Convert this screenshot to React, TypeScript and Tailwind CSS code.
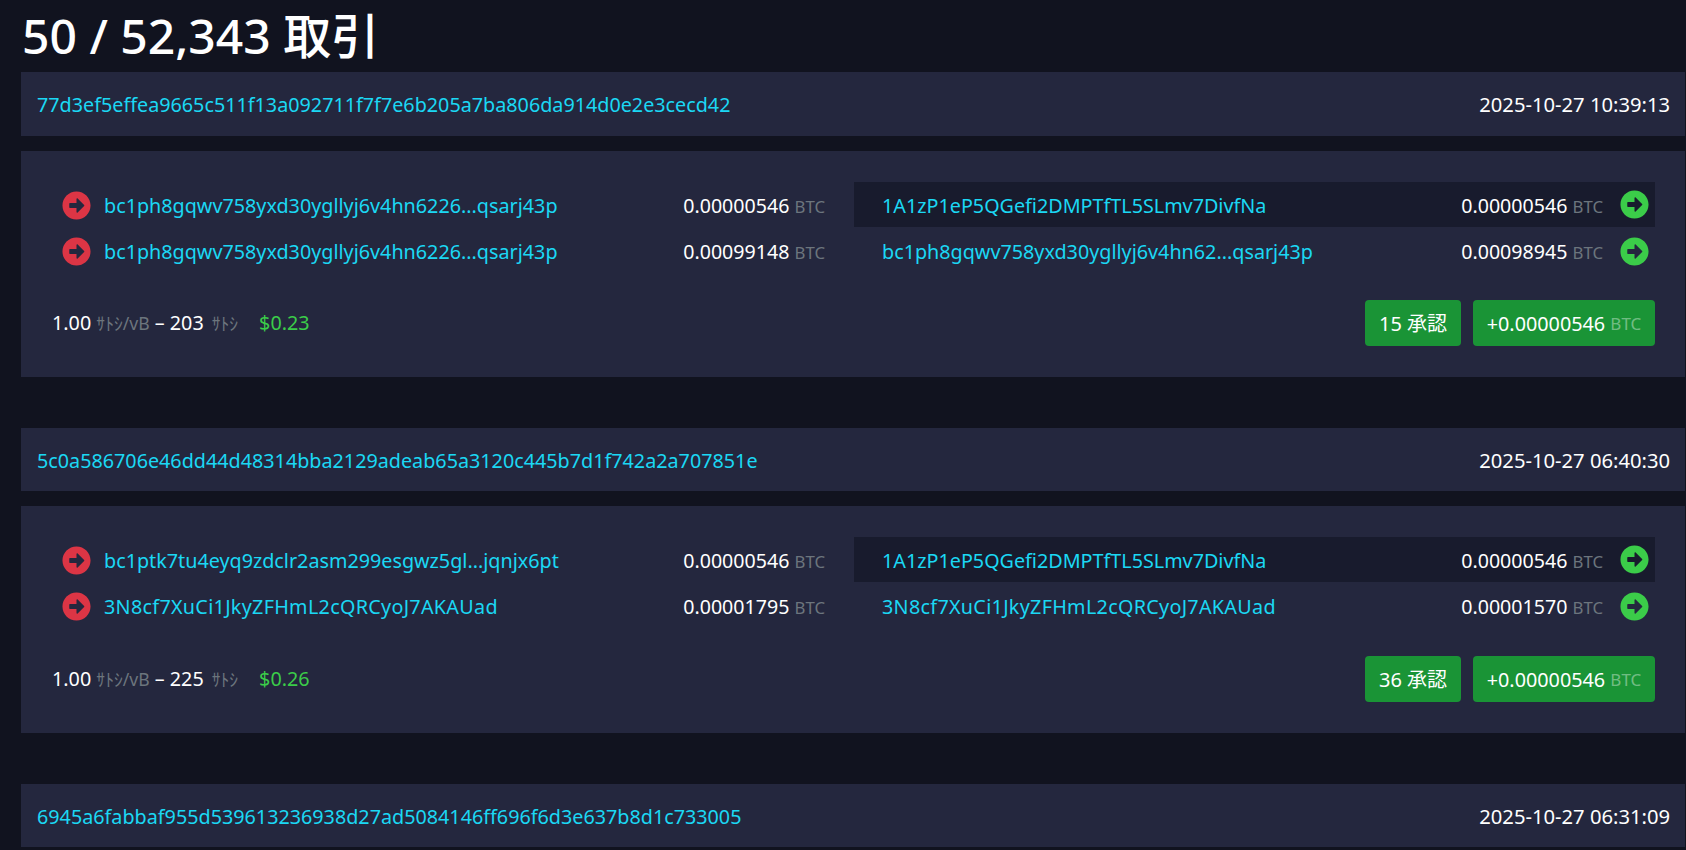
import { FaArrowAltCircleRight } from "react-icons/fa";

const font = "font-['Noto_Sans','Noto_Sans_CJK_JP',sans-serif]";

function Amount({ v }: { v: string }) {
  return (
    <span className="whitespace-nowrap pt-[2px] text-[19.6px] text-white">
      {v} <span className="text-[16.8px] text-[#6c757d]">BTC</span>
    </span>
  );
}

function Addr({ a }: { a: string }) {
  return (
    <span
      className={
        a.startsWith("3N8")
          ? "whitespace-nowrap pt-[2px] tracking-[0.3px] text-[#1bd8f4]"
          : "whitespace-nowrap pt-[2px] text-[#1bd8f4]"
      }
    >
      {a}
    </span>
  );
}

type Row = { a: string; v: string };
type Tx = {
  id: string;
  time: string;
  ins: Row[];
  outs: Row[];
  fee: string;
  usd: string;
  conf: string;
  total: string;
  headerH: string;
  boxH: string;
  footMt: string;
};

const txs: Tx[] = [
  {
    id: "77d3ef5effea9665c511f13a092711f7f7e6b205a7ba806da914d0e2e3cecd42",
    time: "2025-10-27 10:39:13",
    ins: [
      { a: "bc1ph8gqwv758yxd30ygllyj6v4hn6226...qsarj43p", v: "0.00000546" },
      { a: "bc1ph8gqwv758yxd30ygllyj6v4hn6226...qsarj43p", v: "0.00099148" },
    ],
    outs: [
      { a: "1A1zP1eP5QGefi2DMPTfTL5SLmv7DivfNa", v: "0.00000546" },
      { a: "bc1ph8gqwv758yxd30ygllyj6v4hn62...qsarj43p", v: "0.00098945" },
    ],
    fee: "203",
    usd: "$0.23",
    conf: "15 承認",
    total: "+0.00000546",
    headerH: "h-[64px]",
    boxH: "h-[226px]",
    footMt: "mt-[26px]",
  },
  {
    id: "5c0a586706e46dd44d48314bba2129adeab65a3120c445b7d1f742a2a707851e",
    time: "2025-10-27 06:40:30",
    ins: [
      { a: "bc1ptk7tu4eyq9zdclr2asm299esgwz5gl...jqnjx6pt", v: "0.00000546" },
      { a: "3N8cf7XuCi1JkyZFHmL2cQRCyoJ7AKAUad", v: "0.00001795" },
    ],
    outs: [
      { a: "1A1zP1eP5QGefi2DMPTfTL5SLmv7DivfNa", v: "0.00000546" },
      { a: "3N8cf7XuCi1JkyZFHmL2cQRCyoJ7AKAUad", v: "0.00001570" },
    ],
    fee: "225",
    usd: "$0.26",
    conf: "36 承認",
    total: "+0.00000546",
    headerH: "h-[63px]",
    boxH: "h-[227px]",
    footMt: "mt-[27px]",
  },
];

function TxHeader({ id, time, h }: { id: string; time: string; h: string }) {
  return (
    <div className={`flex ${h} items-center justify-between bg-[#24273e] pl-[16px] pr-[15px]`}>
      <span className="pt-[2px] text-[#1bd8f4]">{id}</span>
      <span className="pt-[1px] text-[20.2px] text-white">{time}</span>
    </div>
  );
}

function TxBlock({ tx }: { tx: Tx }) {
  return (
    <div className="mb-[51px]">
      <TxHeader id={tx.id} time={tx.time} h={tx.headerH} />
      <div className={`mt-[15px] ${tx.boxH} bg-[#24273e] pl-[31px] pr-[30px] pt-[31px]`}>
        <div className="flex">
          <div className="w-[802px] pr-[29px]">
            {tx.ins.map((r, i) => (
              <div key={i} className="flex h-[46px] items-center justify-between pl-[10px]">
                <div className="flex items-center gap-[13px]">
                  <FaArrowAltCircleRight className="mt-[1px] h-[29px] w-[29px] text-[#dc3545]" />
                  <Addr a={r.a} />
                </div>
                <Amount v={r.v} />
              </div>
            ))}
          </div>
          <div className="flex-1">
            {tx.outs.map((r, i) => (
              <div
                key={i}
                className={
                  i === 0
                    ? "mb-[1px] flex h-[45px] items-center justify-between bg-[#181b2d] pl-[28px] pr-[6px]"
                    : "flex h-[46px] items-center justify-between pl-[28px] pr-[6px]"
                }
              >
                <Addr a={r.a} />
                <div className="flex items-center gap-[17px]">
                  <Amount v={r.v} />
                  <FaArrowAltCircleRight className="mt-[1px] h-[29px] w-[29px] text-[#3bcc49]" />
                </div>
              </div>
            ))}
          </div>
        </div>
        <div className={`${tx.footMt} flex h-[46px] items-center justify-between`}>
          <div className="flex items-center">
            <span className="whitespace-nowrap text-white">
              1.00 <span className="text-[17.6px] text-[#6c757d]">ｻﾄｼ/vB</span> – {tx.fee}
              <span className="ml-[8px] text-[17.6px] text-[#6c757d]">ｻﾄｼ</span>
            </span>
            <span className="ml-[21px] text-[#3bcc49]">{tx.usd}</span>
          </div>
          <div className="flex gap-[12px] text-[19.8px]">
            <div className="flex h-[46px] w-[96px] items-center justify-center rounded-[4px] bg-[#1a9436] pt-[1px] text-[20px] text-white">
              {tx.conf}
            </div>
            <div className="flex h-[46px] w-[182px] items-center justify-center rounded-[4px] bg-[#1a9436] pt-[1px] text-white">
              {tx.total}&nbsp;<span className="text-[17px] text-white/40">BTC</span>
            </div>
          </div>
        </div>
      </div>
    </div>
  );
}

export default function App() {
  return (
    <div className={`h-[850px] overflow-hidden bg-[#11131f] pl-[21px] pr-[1px] text-[19.75px] ${font}`}>
      <h1 className="h-[72px] pl-[1px] text-[48px] font-medium leading-[72px] text-white">
        50 / 52,343 取引
      </h1>
      {txs.map((t) => (
        <TxBlock key={t.id} tx={t} />
      ))}
      <TxHeader
        id="6945a6fabbaf955d539613236938d27ad5084146ff696f6d3e637b8d1c733005"
        time="2025-10-27 06:31:09"
        h="h-[63px]"
      />
    </div>
  );
}
